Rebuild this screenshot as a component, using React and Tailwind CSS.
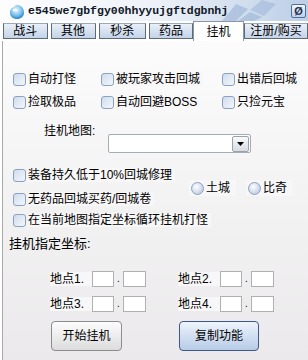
import React from "react";

const font = { fontFamily: '"Liberation Sans", "Noto Sans CJK SC", sans-serif' };

function Box() {
  return (
    <span className="w-[13px] h-[13px] shrink-0 rounded-[3px] border border-[#8aa2c0] bg-linear-to-br from-[#cfdcee] to-[#f4f7fb]" />
  );
}

function Check({ label }) {
  return (
    <div className="flex items-center gap-[2px] h-[16px]">
      <Box />
      <span className="bg-[#f8f7f8] pr-[3px] text-[12px] leading-[14px] whitespace-nowrap">{label}</span>
    </div>
  );
}

function Radio({ label }) {
  return (
    <div className="flex items-center gap-[2px] h-[16px] bg-[#f8f7f8] pl-[2px] pr-[6px]">
      <span className="w-[13px] h-[13px] shrink-0 rounded-full border border-[#8aa2c0] bg-radial-[at_40%_35%] from-white to-[#aebfdc]" />
      <span className="text-[12px] leading-[14px]">{label}</span>
    </div>
  );
}

function Spot({ n }) {
  return (
    <div className="flex items-center h-[16px] w-[96px]">
      <span className="w-[42px] text-[12px] leading-[14px] bg-[#f8f7f8]">地点{n}.</span>
      <span className="w-[22px] h-[16px] bg-white border border-[#b0b0b0]" />
      <span className="w-[9px] text-center text-[10px] leading-[16px]">.</span>
      <span className="w-[23px] h-[16px] bg-white border border-[#b0b0b0]" />
    </div>
  );
}

function Tab({ label, w, active }) {
  return active ? (
    <div className={`${w} h-[20px] bg-white border-x border-t border-[#8a97a8] flex items-center justify-center text-[12px] leading-[14px]`}>
      {label}
    </div>
  ) : (
    <div className={`${w} h-[16px] mt-[2px] bg-linear-to-b from-[#e9f0f9] to-[#c3d3e8] border border-[#5f6a78] border-t-[#9aa8ba] flex items-center justify-center text-[12px] leading-[14px]`}>
      {label}
    </div>
  );
}

export default function App() {
  return (
    <div className="w-[308px] h-[360px] overflow-hidden flex flex-col bg-white text-black" style={font}>
      {/* title bar */}
      <div className="relative h-[21px] flex items-center bg-linear-to-r from-[#fdfdfe] via-[#eef2f8] to-[#bccfe6]">
        <svg width="16" height="16" viewBox="0 0 16 16" className="ml-[9px] mt-[2px]">
          <defs>
            <radialGradient id="bub" cx="45%" cy="35%" r="65%">
              <stop offset="0%" stopColor="#e8f6ff" />
              <stop offset="60%" stopColor="#7cc3ec" />
              <stop offset="100%" stopColor="#2b86c8" />
            </radialGradient>
          </defs>
          <path d="M8 1 C12 1 15 4 15 8.5 C15 12.5 12 15 8 15 C4 15 1 12.5 1 8.5 C1 5 3.5 3.5 5 3 C6 1.8 7 1 8 1 Z" fill="url(#bub)" />
          <ellipse cx="6" cy="6" rx="2.5" ry="1.6" fill="#ffffff" opacity="0.8" />
        </svg>
        <span className="ml-[3px] font-bold text-[11.5px] leading-[14px] text-[#101828]" style={{ fontFamily: '"Liberation Mono", monospace' }}>
          e545we7gbfgy00hhyyujgftdgbnhj
        </span>
        <svg width="70" height="21" viewBox="0 0 70 21" className="absolute left-[214px] top-0 opacity-40">
          <path d="M8 21 L22 4 L34 9 L22 21 Z" fill="#7f9fcb" />
          <path d="M36 10 L48 0 L62 4 L50 16 Z" fill="#8eaad3" />
          <path d="M24 21 L36 12 L48 17 L40 21 Z" fill="#7f9fcb" />
        </svg>
        <div className="absolute left-[291px] top-[4px] w-[15px] h-[14px] rounded-[2px] border border-[#4f6f9c] bg-linear-to-b from-[#f2f6fc] to-[#bfd0e8] flex items-center justify-center">
          <span className="font-bold text-[11px] leading-[12px] text-[#1f2f4f]">Ø</span>
        </div>
      </div>

      {/* tabs */}
      <div className="h-[20px] flex items-start pl-[3px] gap-[3px] bg-white">
        <Tab label="战斗" w="w-[45px]" />
        <Tab label="其他" w="w-[45px]" />
        <Tab label="秒杀" w="w-[48px]" />
        <Tab label="药品" w="w-[44px]" />
        <div className="-ml-[3px] flex">
          <Tab label="挂机" w="w-[51px]" active />
          <Tab label="注册/购买" w="w-[64px]" />
        </div>
      </div>

      {/* panel */}
      <div className="flex-1 ml-[2px] border-l border-[#a9a9a9] bg-linear-to-b from-[#fcfcfc] to-[#ebe9eb] flex flex-col pt-[30px]">
        <div className="grid grid-cols-[88px_121px_1fr] pl-[10px] gap-y-[7px]">
          <Check label="自动打怪" />
          <Check label="被玩家攻击回城" />
          <Check label="出错后回城" />
          <Check label="捡取极品" />
          <Check label="自动回避BOSS" />
          <Check label="只捡元宝" />
        </div>

        <div className="flex items-start mt-[14px] pl-[41px]">
          <span className="text-[12px] leading-[14px] w-[64px]">挂机地图:</span>
          <div className="mt-[10px] w-[143px] h-[19px] bg-white border border-[#a5acb5] rounded-[2px] flex justify-end items-center pr-[1px]">
            <span className="w-[17px] h-[16px] rounded-[2px] border border-[#9aa3ad] bg-linear-to-b from-[#fafafa] to-[#d8dbe0] flex items-center justify-center">
              <svg width="7" height="4" viewBox="0 0 7 4"><path d="M0 0 H7 L3.5 4 Z" fill="#000" /></svg>
            </span>
          </div>
        </div>

        <div className="flex items-center mt-[14px] pl-[10px]">
          <div className="flex flex-col gap-[8px] w-[176px]">
            <Check label="装备持久低于10%回城修理" />
            <Check label="无药品回城买药/回城卷" />
          </div>
          <div className="flex gap-[10px] mt-[2px]">
            <Radio label="土城" />
            <Radio label="比奇" />
          </div>
        </div>
        <div className="mt-[5px] pl-[10px]">
          <Check label="在当前地图指定坐标循环挂机打怪" />
        </div>

        <div className="mt-[8px] pl-[6px] text-[13px] leading-[16px]">挂机指定坐标:</div>

        <div className="mt-[19px] pl-[47px] flex flex-col gap-[9px]">
          <div className="flex gap-[32px]">
            <Spot n="1" />
            <Spot n="2" />
          </div>
          <div className="flex gap-[32px]">
            <Spot n="3" />
            <Spot n="4" />
          </div>
        </div>

        <div className="mt-[9px] pl-[48px] flex gap-[57px]">
          <button className="w-[71px] h-[30px] rounded-[4px] border border-[#8c8c8c] bg-linear-to-b from-[#fdfdfd] to-[#dcdcdc] text-[12px]">
            开始挂机
          </button>
          <button className="w-[80px] h-[30px] rounded-[4px] border border-[#3d5a86] bg-linear-to-b from-[#eef4fc] to-[#b7cbe7] text-[12px]">
            复制功能
          </button>
        </div>
      </div>
    </div>
  );
}
